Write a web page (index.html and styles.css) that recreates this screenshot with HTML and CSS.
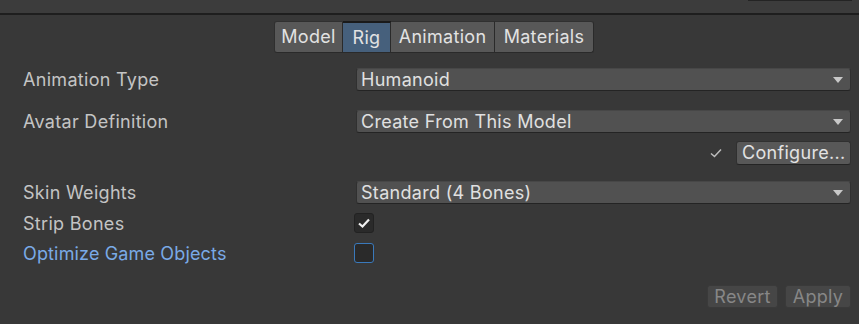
FILE: index.html
```html
<!DOCTYPE html>
<html>
<head>
<meta charset="utf-8">
<link rel="stylesheet" href="styles.css">
</head>
<body>
<div class="top">
  <div class="top-btn"></div>
</div>
<div class="sep"></div>
<div class="tabs">
  <div class="tab t-model">Model</div>
  <div class="tab t-rig active">Rig</div>
  <div class="tab t-anim">Animation</div>
  <div class="tab t-mat">Materials</div>
</div>
<div class="form">
  <div class="row r1">
    <div class="label">Animation Type</div>
    <div class="dropdown"><span>Humanoid</span><span class="arrow"></span></div>
  </div>
  <div class="row r2">
    <div class="label">Avatar Definition</div>
    <div class="dropdown"><span>Create From This Model</span><span class="arrow"></span></div>
  </div>
  <div class="row r3">
    <svg class="tick" width="12" height="10" viewBox="0 0 12 10"><path d="M1 5.5 L4.5 8.5 L11 1.5" fill="none" stroke="#bdbdbd" stroke-width="1.5"/></svg>
    <div class="btn configure">Configure...</div>
  </div>
  <div class="row r4">
    <div class="label">Skin Weights</div>
    <div class="dropdown"><span>Standard (4 Bones)</span><span class="arrow"></span></div>
  </div>
  <div class="row r5">
    <div class="label">Strip Bones</div>
    <div class="check"><svg width="14" height="12" viewBox="0 0 14 12"><path d="M2 6.5 L5.5 9.5 L12 2.5" fill="none" stroke="#f0f0f0" stroke-width="2.2"/></svg></div>
  </div>
  <div class="row r6">
    <div class="label blue">Optimize Game Objects</div>
    <div class="check focus"></div>
  </div>
  <div class="row r7">
    <div class="btn disabled revert">Revert</div>
    <div class="btn disabled apply">Apply</div>
  </div>
</div>
</body>
</html>
```
FILE: styles.css
```css
* { box-sizing: border-box; }
html, body {
  margin: 0;
  padding: 0;
  background: #383838;
  font-family: Inter, "Noto Sans", sans-serif;
  color: #c4c4c4;
  width: 859px;
  height: 324px;
  overflow: hidden;
  font-size: 18px;
  letter-spacing: 0.3px;
}
.top {
  height: 13px;
  background: #3c3c3c;
  display: flex;
  justify-content: flex-end;
  padding-right: 7px;
}
.top-btn {
  width: 104px;
  height: 1px;
  background: #242424;
}
.sep {
  height: 2px;
  background: #1e1e1e;
}
.tabs {
  display: flex;
  padding-left: 274px;
  margin-top: 6px;
}
.tab {
  height: 32px;
  line-height: 30px;
  padding: 0;
  text-align: center;
  background: #585858;
  color: #e2e2e2;
  border: 1px solid #2a2a2a;
  border-left: none;
  border-top-color: #303030;
}
.t-model { width: 69px; }
.t-rig { width: 48px; }
.t-anim { width: 104px; }
.t-mat { width: 99px; }
.tab:first-child {
  border-left: 1px solid #2f2f2f;
  border-radius: 3px 0 0 3px;
}
.tab:last-child {
  border-radius: 0 3px 3px 0;
}
.tab.active {
  background: #46607c;
  border-top: 2px solid #1a1a1a;
  line-height: 29px;
}
.form {
  padding: 0 8px 0 23px;
}
.row {
  display: flex;
  align-items: center;
  height: 23px;
}
.label {
  width: 333px;
  color: #c4c4c4;
}
.label.blue {
  color: #7aaae6;
  letter-spacing: 0.15px;
}
.dropdown {
  flex: 1;
  height: 23px;
  background: #515151;
  border: 1px solid #303030;
  border-top-color: #474747;
  border-bottom-color: #242424;
  border-radius: 3px;
  display: flex;
  align-items: center;
  justify-content: space-between;
  padding: 0 7px 0 4px;
  color: #e0e0e0;
}
.arrow {
  width: 0;
  height: 0;
  border-left: 5px solid transparent;
  border-right: 5px solid transparent;
  border-top: 6px solid #c8c8c8;
}
.r1 { margin-top: 15px; }
.r2 { margin-top: 19px; }
.r3 {
  margin-top: 8px;
  height: 24px;
  justify-content: flex-end;
}
.tick { margin-right: 14px; }
.btn {
  height: 23px;
  line-height: 21px;
  padding: 0 5px;
  background: #585858;
  border: 1px solid #303030;
  border-bottom-color: #242424;
  border-radius: 3px;
  color: #e2e2e2;
  text-align: center;
}
.configure { width: 115px; height: 24px; line-height: 22px; }
.r4 { margin-top: 16px; }
.r5 { margin-top: 9px; height: 20px; }
.r6 { margin-top: 10px; height: 20px; }
.check {
  width: 20px;
  height: 20px;
  background: #2a2a2a;
  border: 1px solid #222222;
  border-radius: 3px;
  display: flex;
  align-items: center;
  justify-content: center;
  margin-left: -2px;
}
.check.focus {
  border: 1px solid #3a79bb;
}
.r7 {
  margin-top: 22px;
  justify-content: flex-end;
}
.btn.disabled {
  background: #464646;
  color: #878787;
  border-color: #3a3a3a;
}
.revert { margin-right: 7px; width: 71px; }
.apply { width: 66px; }
```
